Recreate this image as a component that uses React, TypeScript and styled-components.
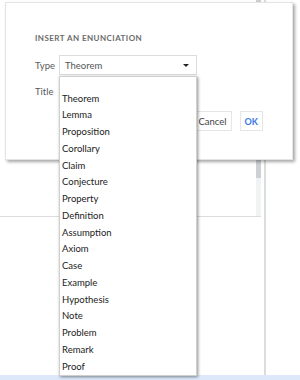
import { createGlobalStyle } from 'styled-components'
import styled from 'styled-components'

const GlobalStyle = createGlobalStyle`
  html, body {
    margin: 0;
    padding: 0;
    background: #fff;
  }
  body {
    font-family: Lato, "Noto Sans", sans-serif;
    color: #333;
  }
`

const KINDS = [
  'Theorem',
  'Lemma',
  'Proposition',
  'Corollary',
  'Claim',
  'Conjecture',
  'Property',
  'Definition',
  'Assumption',
  'Axiom',
  'Case',
  'Example',
  'Hypothesis',
  'Note',
  'Problem',
  'Remark',
  'Proof'
]

const Page = styled.div`
  position: relative;
  width: 300px;
  height: 380px;
  display: flex;
  flex-direction: column;
  overflow: hidden;
`

const Workspace = styled.div`
  flex: 1;
  display: flex;
  gap: 3px;
`

const Editor = styled.div`
  width: 261px;
  display: flex;
  flex-direction: column;
`

const ScrollArea = styled.div`
  height: 217px;
  display: flex;
  justify-content: flex-end;
  border-bottom: 1px solid #dcdcdc;
  box-sizing: border-box;
`

const Track = styled.div`
  width: 5px;
  background: #f1f2f4;
  display: flex;
  flex-direction: column;
`

const Thumb = styled.div`
  height: 178px;
  background: #cdd0d5;
`

const SidePane = styled.div`
  flex: 1;
  border-left: 2px solid #dcdcdc;
`

const StatusBar = styled.div`
  height: 5px;
  background: #dde9fb;
`

const Dialog = styled.div`
  position: absolute;
  left: 5px;
  top: 2px;
  width: 288px;
  height: 158px;
  box-sizing: border-box;
  background: #fff;
  border: 1px solid #e4e4e4;
  box-shadow: 2px 2px 3px rgba(0, 0, 0, 0.35);
  padding: 29px 29px 0 29px;
  display: flex;
  flex-direction: column;
`

const Heading = styled.div`
  font-size: 8px;
  font-weight: 700;
  letter-spacing: 0.45px;
  color: #6b6b6b;
  line-height: 12px;
  margin-bottom: 11px;
`

const Row = styled.div`
  display: flex;
  align-items: center;
  height: 20px;
  margin-bottom: 6px;
`

const Label = styled.div`
  width: 24px;
  font-size: 9.5px;
  color: #5a5a5a;
`

const Select = styled.div`
  width: 138px;
  height: 20px;
  box-sizing: border-box;
  border: 1px solid #dcdcdc;
  display: flex;
  align-items: center;
  justify-content: space-between;
  padding: 0 7px 0 5px;
  font-size: 9.5px;
  color: #555;
`

const Caret = styled.span`
  width: 0;
  height: 0;
  border-left: 3px solid transparent;
  border-right: 3px solid transparent;
  border-top: 3px solid #222;
`

const Actions = styled.div`
  display: flex;
  justify-content: flex-end;
  gap: 8px;
  margin-top: 4px;
`

const Button = styled.div<{ $primary?: boolean }>`
  height: 20px;
  box-sizing: border-box;
  border: 1px solid #e6e6e6;
  display: flex;
  align-items: center;
  padding: 0 4px;
  font-size: ${(p) => (p.$primary ? '9px' : '9.5px')};
  font-weight: ${(p) => (p.$primary ? 700 : 400)};
  color: ${(p) => (p.$primary ? '#3a78e6' : '#444')};
`

const Menu = styled.ul`
  position: absolute;
  left: 59px;
  top: 76px;
  width: 138px;
  box-sizing: border-box;
  margin: 0;
  padding: 0;
  list-style: none;
  background: #fff;
  border: 1px solid #cfcfcf;
  box-shadow: 1px 1px 3px rgba(0, 0, 0, 0.45);
`

const Option = styled.li<{ $blank?: boolean }>`
  height: ${(p) => (p.$blank ? '13.6px' : '16.75px')};
  line-height: 16.75px;
  padding-left: 2px;
  font-size: 9.5px;
  color: #222;
  white-space: nowrap;
`

export default function App() {
  return (
    <Page>
      <GlobalStyle />
      <Workspace>
        <Editor>
          <ScrollArea>
            <Track>
              <Thumb />
            </Track>
          </ScrollArea>
        </Editor>
        <SidePane />
      </Workspace>
      <StatusBar />

      <Dialog>
        <Heading>INSERT AN ENUNCIATION</Heading>
        <Row>
          <Label>Type</Label>
          <Select>
            Theorem
            <Caret />
          </Select>
        </Row>
        <Row>
          <Label>Title</Label>
          <Select />
        </Row>
        <Actions>
          <Button>Cancel</Button>
          <Button $primary>OK</Button>
        </Actions>
      </Dialog>

      <Menu>
        <Option $blank />
        {KINDS.map((kind) => (
          <Option key={kind}>{kind}</Option>
        ))}
      </Menu>
    </Page>
  )
}
